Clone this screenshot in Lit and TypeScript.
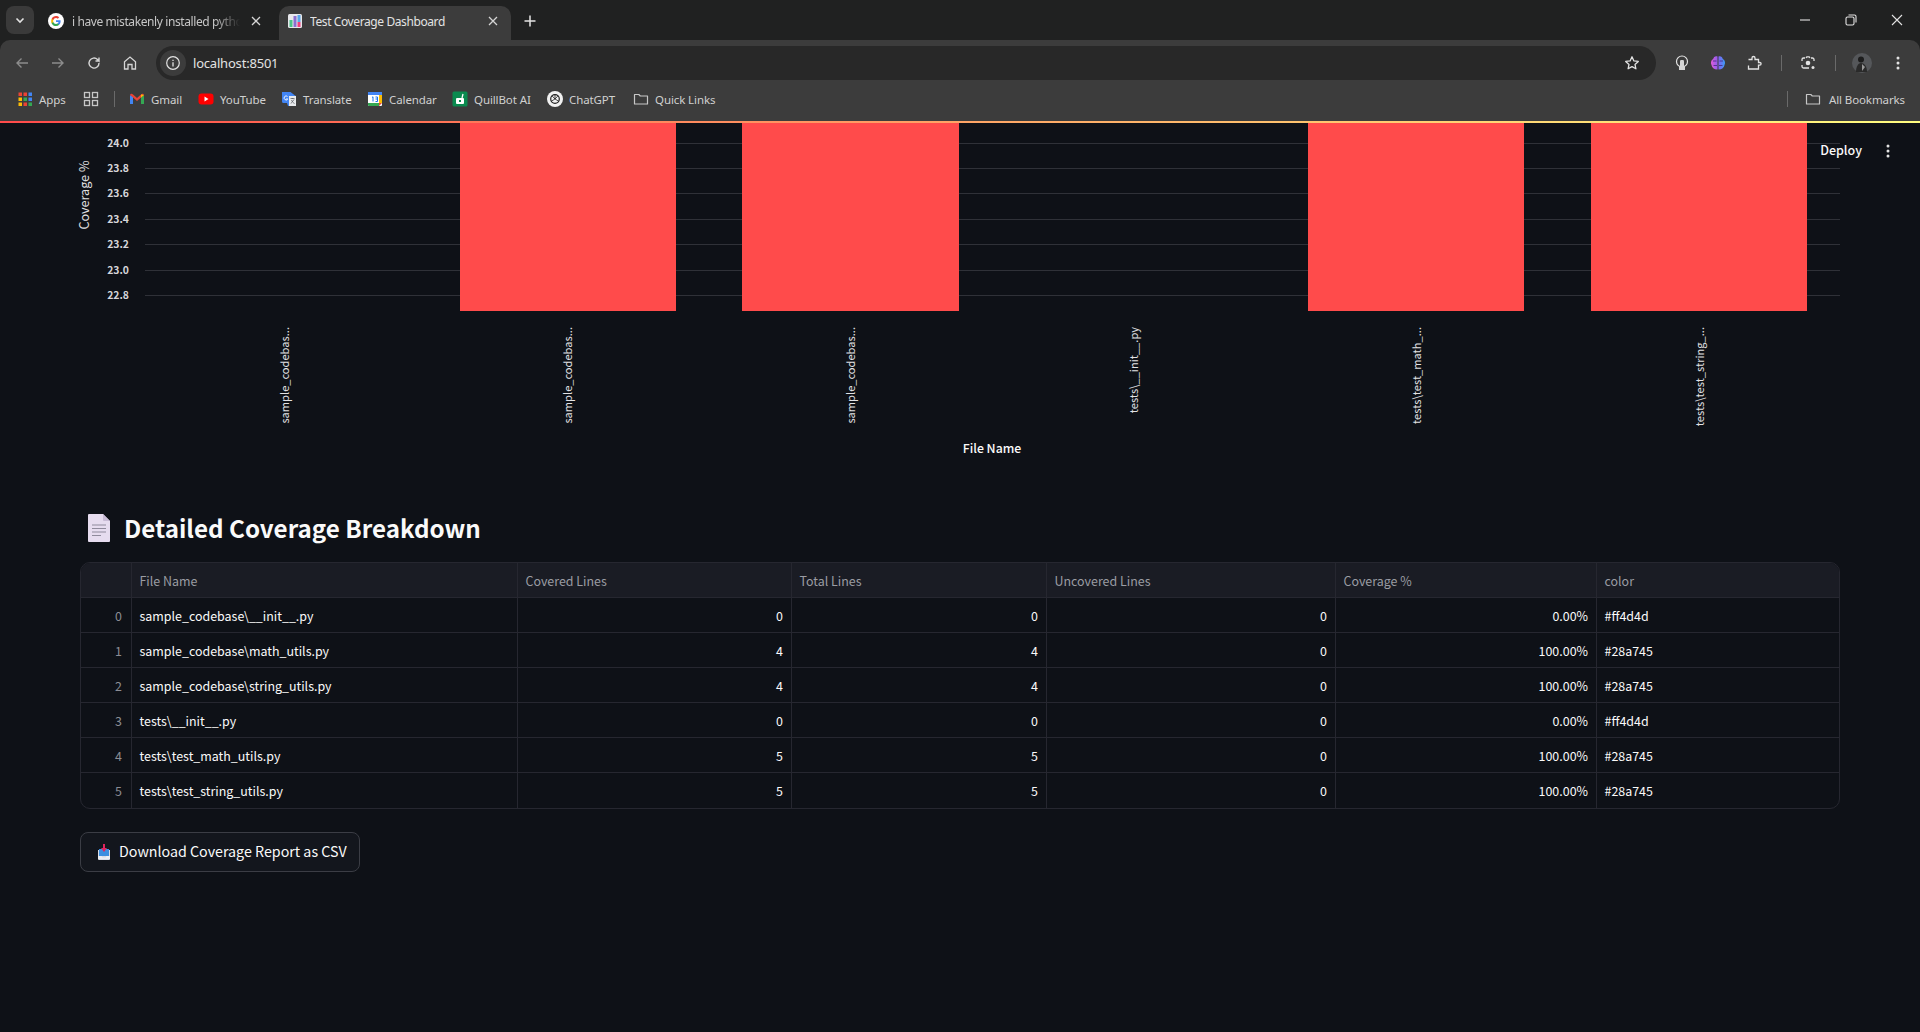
import { LitElement, html, css, svg } from "lit";
import { customElement } from "lit/decorators.js";

const ticks = [["24.0",143.5],["23.8",168.5],["23.6",193.5],["23.4",219.5],["23.2",244.5],["23.0",270.5],["22.8",295.5]] as const;
const bars = [[460,216],[742,217],[1308,216],[1591,216]];
const xLabels = [[285,"sample_codebas..."],[568,"sample_codebas..."],[851,"sample_codebas..."],[1134,"tests\\__init__.py"],[1417,"tests\\test_math_..."],[1700,"tests\\test_string_..."]] as const;
const rows = [
  ["0","sample_codebase\\__init__.py","0","0","0","0.00%","#ff4d4d"],
  ["1","sample_codebase\\math_utils.py","4","4","0","100.00%","#28a745"],
  ["2","sample_codebase\\string_utils.py","4","4","0","100.00%","#28a745"],
  ["3","tests\\__init__.py","0","0","0","0.00%","#ff4d4d"],
  ["4","tests\\test_math_utils.py","5","5","0","100.00%","#28a745"],
  ["5","tests\\test_string_utils.py","5","5","0","100.00%","#28a745"],
];
const heads = ["","File Name","Covered Lines","Total Lines","Uncovered Lines","Coverage %","color"];

const icon = (inner: unknown, size = 16, vb = "0 0 16 16") => html`<svg width=${size} height=${size} viewBox=${vb} fill="none">${inner}</svg>`;

const gFavicon = icon(svg`<circle cx="8" cy="8" r="8" fill="#fff"/>
  <path d="M12.6 8.2c0-.4 0-.7-.1-1H8v1.9h2.6c-.1.6-.5 1.1-1 1.5v1.2h1.6c.9-.9 1.4-2.1 1.4-3.6z" fill="#4285f4"/>
  <path d="M8 13c1.3 0 2.4-.4 3.2-1.2l-1.6-1.2c-.4.3-1 .5-1.6.5-1.2 0-2.3-.8-2.7-2H3.7v1.3C4.5 12 6.1 13 8 13z" fill="#34a853"/>
  <path d="M5.3 9.1c-.2-.7-.2-1.4 0-2.1V5.700H3.700c-.7 1.400-.7 3.100 0 4.600z" fill="#fbbc05"/>
  <path d="M8 5c.7 0 1.300.2 1.800.7l1.400-1.400C10.300 3.500 9.200 3 8 3 6.100 3 4.500 4 3.700 5.700L5.300 7C5.700 5.800 6.800 5 8 5z" fill="#ea4335"/>`);
const chartFavicon = icon(svg`<rect x="1" y="1" width="14" height="14" rx="1.500" fill="#e8e8ec"/>
  <rect x="2.500" y="7" width="3" height="7" fill="#4cc38a"/><rect x="6.500" y="3" width="3" height="11" fill="#8a6fd1"/><rect x="10.500" y="9" width="3" height="5" fill="#ef3f7f"/><rect x="10.500" y="2" width="3" height="7" fill="#5aa7e8"/>`);
const closeX = icon(svg`<path d="M4 4l8 8M12 4l-8 8" stroke="#d5d5d5" stroke-width="1.300"/>`);

const tb = {
  back: icon(svg`<path d="M14 8H3M7.500 3.500L3 8l4.500 4.500" stroke="#8c8c8c" stroke-width="1.400"/>`),
  fwd: icon(svg`<path d="M2 8h11M8.500 3.500L13 8l-4.500 4.500" stroke="#8c8c8c" stroke-width="1.400"/>`),
  reload: icon(svg`<path d="M13 8a5 5 0 1 1-1.500-3.500L13 6V2.500M13 6H9.500" stroke="#d5d5d5" stroke-width="1.400"/>`),
  home: icon(svg`<path d="M2.500 14V6.700L8 2l5.500 4.700V14H10V9.500H6V14z" stroke="#d5d5d5" stroke-width="1.300"/>`),
  info: icon(svg`<circle cx="8" cy="8" r="6.300" stroke="#e3e3e3" stroke-width="1.200"/><path d="M8 7.200V11.500M8 4.700v1.300" stroke="#e3e3e3" stroke-width="1.300"/>`),
  star: icon(svg`<path d="M8 1.800l1.900 4.100 4.400.5-3.300 3 .9 4.400L8 11.600l-3.900 2.200.9-4.400-3.300-3 4.400-.5z" stroke="#e3e3e3" stroke-width="1.300" stroke-linejoin="round"/>`),
  bulb: icon(svg`<circle cx="8" cy="6.500" r="5.500" stroke="#e3e3e3" stroke-width="1.200"/><rect x="6" y="5" width="4" height="7" rx="1.200" fill="#d5d5d5"/><rect x="5" y="11" width="6" height="4" fill="#d5d5d5"/>`),
  brain: icon(svg`<defs><linearGradient id="br" x1="0" x2="1"><stop offset="0" stop-color="#e05bd8"/><stop offset=".5" stop-color="#8a5cf0"/><stop offset="1" stop-color="#3a9cf5"/></linearGradient></defs>
    <path d="M7.500 1.500C5.500.7 3.500 2 3.200 4 1 5 .3 8 1.500 10c.3 2.500 2.500 4.500 6 4.500zM8.500 1.500c2-.8 4 .5 4.300 2.500 2.200 1 2.900 4 1.700 6-.3 2.500-2.500 4.500-6 4.500z" fill="url(#br)"/>
    <path d="M3 6h3.500M3.500 10.500H7M9.500 6H13M9 10.500h3.500" stroke="#3d2a7a" stroke-width=".8"/>`),
  puzzle: icon(svg`<path d="M2 4.500h3.500V3a1.500 1.500 0 0 1 3 0v1.500H12V7.500h1.300a1.300 1.300 0 0 1 0 2.600H12v3.900H2V10.500" stroke="#e3e3e3" stroke-width="1.300" transform="translate(.5 0)"/>`),
  lens: icon(svg`<path d="M5 3H3.500A1.500 1.500 0 0 0 2 4.500V6M11 3h1.500A1.500 1.500 0 0 1 14 4.500V6M2 10v1.500A1.500 1.500 0 0 0 3.500 13H9" stroke="#e3e3e3" stroke-width="1.300"/><circle cx="8" cy="8" r="2.300" fill="#e3e3e3"/><circle cx="13" cy="12.500" r="1.500" fill="#e3e3e3"/><path d="M6 3l.8-1.200h2.400L10 3" stroke="#e3e3e3" stroke-width="1.200"/>`),
  kebab: icon(svg`<circle cx="8" cy="3" r="1.500" fill="#e3e3e3"/><circle cx="8" cy="8" r="1.500" fill="#e3e3e3"/><circle cx="8" cy="13" r="1.500" fill="#e3e3e3"/>`),
};
const avatar = html`<svg width="20" height="20" viewBox="0 0 20 20"><circle cx="10" cy="10" r="10" fill="#55575a"/><circle cx="9" cy="6.500" r="3" fill="#1d1d1d"/><path d="M4 19c0-5 2-9 5-9s6 3 6 9z" fill="#2a2a2a"/><path d="M10 11l3 3-3 4z" fill="#9a9a9a"/></svg>`;

const folder = icon(svg`<path d="M1.500 3.500h4.300l1.500 1.500h7.200v8H1.500z" stroke="#c7c7c7" stroke-width="1.200" stroke-linejoin="round"/>`);
const bookmarks = [
  { w: 66, label: "Apps", icon: icon(svg`${[1.5,6.5,11.5].flatMap((y, r) => [1.5,6.5,11.5].map((x, c) => svg`<rect x=${x} y=${y} width="3.500" height="3.500" fill=${[["#ea4335","#ea4335","#4285f4"],["#fbbc05","#34a853","#4285f4"],["#fbbc05","#ea4335","#34a853"]][r][c]}/>`))}`) },
  { w: 31, label: "", grid: true, icon: icon(svg`<rect x="1.500" y="1.500" width="5" height="5" stroke="#c7c7c7" stroke-width="1.300"/><rect x="9.500" y="1.500" width="5" height="5" stroke="#c7c7c7" stroke-width="1.300"/><rect x="1.500" y="9.500" width="5" height="5" stroke="#c7c7c7" stroke-width="1.300"/><rect x="9.500" y="9.500" width="5" height="5" stroke="#c7c7c7" stroke-width="1.300"/>`) },
  { w: 69, label: "Gmail", icon: icon(svg`<path d="M1 13V4l3 2v7z" fill="#4285f4"/><path d="M12 13V6l3-2v9z" fill="#34a853"/><path d="M1 4c.5-1.500 2-1.500 3-.5L8 7l4-3.500c1-1 2.500-1 3 .5l-3 2.500L8 10 4 6.500z" fill="#ea4335"/><path d="M12 3.500l3 .5-3 2.500z" fill="#fbbc05"/>`) },
  { w: 83, label: "YouTube", icon: icon(svg`<rect x="0.500" y="2.500" width="15" height="11" rx="3" fill="#f00"/><path d="M6.500 5.500l4 2.500-4 2.500z" fill="#fff"/>`) },
  { w: 86, label: "Translate", icon: icon(svg`<path d="M1 1h8.500L14 4.500h.5V15H7L6 12H2.500A1.500 1.500 0 0 1 1 10.500z" fill="#4285f4"/><path d="M8 5h7v10H8z" fill="#e8eaed"/><path d="M6.500 5.500a2 2 0 1 0 .3 2.500H5" stroke="#fff" stroke-width=".9"/><path d="M9.500 7.500h4M11.500 7v1M10 12.500l3-4M10.500 9c.5 1.500 2 3 3 3.500" stroke="#5f6368" stroke-width=".8"/>`) },
  { w: 85, label: "Calendar", icon: icon(svg`<rect x="1" y="1" width="14" height="14" rx="1" fill="#fff"/><path d="M1 1h14v3H1z" fill="#4285f4"/><path d="M1 12h11v3H2a1 1 0 0 1-1-1z" fill="#34a853"/><path d="M12 4h3v8h-3z" fill="#fbbc05"/><path d="M12 12h3l-3 3z" fill="#ea4335"/><path d="M5 6.500l1-.7V10.500M8.500 6h2v4.500h-2M10.500 8h-2" stroke="#1a73e8" stroke-width="1"/>`) },
  { w: 95, label: "QuillBot AI", icon: icon(svg`<rect x="0.500" y="0.500" width="15" height="15" rx="1.500" fill="#0a8a4f"/><rect x="4" y="7" width="8" height="6" rx="1" fill="#fff"/><rect x="7" y="9" width="2" height="2" fill="#0a8a4f"/><path d="M10 7l1-4" stroke="#fff" stroke-width="1.300"/>`) },
  { w: 86, label: "ChatGPT", icon: icon(svg`<circle cx="8" cy="8" r="8" fill="#f1f1f1"/><circle cx="8" cy="8" r="4.300" stroke="#222" stroke-width="1.200"/><path d="M8 3.700v4.300l3.700 2.200M8 8l-3.700 2.200M5 4.800l3 3.200 3-3.200" stroke="#222" stroke-width=".8"/>`) },
  { w: 90, label: "Quick Links", icon: folder },
];

@customElement("app-root")
export class AppRoot extends LitElement {
  static styles = css`
    :host { display: flex; flex-direction: column; height: 100vh; overflow: hidden; background: #0e1117; font-family: "Noto Sans CJK SC", "Noto Sans", sans-serif; position: relative; }
    .chrome { flex: none; background: #202121; font-family: "Noto Sans", "Liberation Sans", sans-serif; color: #e3e3e3; font-size: 12px; }
    .strip { height: 40px; display: flex; align-items: flex-end; box-sizing: border-box; padding-left: 6px; }
    .tab-menu { width: 28px; height: 28px; margin-bottom: 6px; background: #3a3a3a; border-radius: 8px; display: flex; align-items: center; justify-content: center; }
    .tab { height: 34px; display: flex; align-items: center; box-sizing: border-box; position: relative; padding-bottom: 4px; }
    .tab.one { width: 232px; margin-left: 6px; padding-left: 8px; color: #c7c7c7; }
    .tab.two { width: 232px; margin-left: 7px; background: #3c3c3c; border-radius: 10px 10px 0 0; padding-left: 8px; }
    .tab .title { margin-left: 8px; width: 168px; overflow: hidden; white-space: nowrap; letter-spacing: -0.4px; -webkit-mask-image: linear-gradient(90deg,#000 85%,transparent); }
    .tab.two .title { margin-left: 7px; width: 167px; mask-image: none; -webkit-mask-image: none; }
    .tab .x { margin-left: 8px; display: flex; }
    .plus { width: 20px; height: 34px; padding-bottom: 4px; box-sizing: border-box; margin-left: 9px; display: flex; align-items: center; justify-content: center; }
    .spacer { flex: 1; }
    .win { width: 46px; height: 40px; display: flex; align-items: center; justify-content: center; }
    .toolbar { height: 46px; background: #3c3c3c; border-radius: 10px 10px 0 0; display: flex; align-items: center; padding: 0 4px; box-sizing: border-box; }
    .btn { width: 36px; height: 34px; display: flex; align-items: center; justify-content: center; flex: none; }
    .addr { flex: 1; height: 34px; margin: 0 8px; background: #282828; border-radius: 17px; display: flex; align-items: center; font-size: 13px; padding-right: 7px; }
    .addr .chip { width: 26px; height: 26px; margin-left: 4px; border-radius: 50%; background: #3c3c3c; display: flex; align-items: center; justify-content: center; }
    .addr .url { margin-left: 7px; flex: 1; letter-spacing: -0.2px; }
    .addr .btn { width: 34px; }
    .tsep { width: 1px; height: 16px; background: #6a6a6a; flex: none; margin: 0 8.500px; }
    .marks { height: 35px; background: #3c3c3c; display: flex; align-items: center; padding: 0 0 9px 17px; box-sizing: border-box; color: #d0d0d0; font-size: 11.500px; letter-spacing: -0.1px; }
    .mark { display: flex; align-items: center; gap: 6px; flex: none; white-space: nowrap; }
    .marks .vsep { width: 1px; height: 16px; background: #6a6a6a; flex: none; margin-right: 14px; }
    .all { margin-left: auto; display: flex; align-items: center; padding-right: 15px; gap: 8px; }
    .all .vsep { margin-right: 9px; }
    .deco { height: 2px; flex: none; background: linear-gradient(90deg, #ff4b4b, #fffd80); }
    main { flex: 1; display: flex; flex-direction: column; min-height: 0; }
    .chart { display: block; flex: none; }
    .chart text { font-family: "Noto Sans CJK SC", "Noto Sans", sans-serif; fill: #e2e2e5; font-size: 11.100px; }
    .chart .ytitle { font-size: 12.600px; }
    .chart .tick { font-weight: 700; fill: #d6d6da; font-size: 10.400px; }
    .chart .bold { font-weight: 500; fill: #fafafa; font-size: 12.300px; }
    .section { padding: 0 80px; }
    h2 { margin: 0; height: 48px; display: flex; align-items: center; gap: 14px; font-size: 24.200px; font-weight: 700; color: #fafafa; line-height: 48px; padding-left: 8px; }
    .table { margin-top: 10px; display: grid; grid-template-columns: 51px 386px 274px 255px 289px 261px 1fr; border: 1px solid #262730; border-radius: 10px; overflow: hidden; font-size: 12.450px; box-sizing: border-box; width: 1760px; }
    .c { height: 35px; line-height: 36px; padding: 0 8px 0 7.500px; box-sizing: border-box; color: #fafafa; border-right: 1px solid #262730; border-bottom: 1px solid #262730; white-space: nowrap; overflow: hidden; }
    .c.h { background: #1a1c24; color: #9a9ca3; height: 35px; }
    .c.idx { color: #8b8d94; text-align: right; padding-right: 9px; }
    .c.n { text-align: right; }
    .c.last { border-right: none; }
    .c.bot { border-bottom: none; }
    .dl { margin-top: 23px; width: 280px; height: 40px; box-sizing: border-box; border: 1px solid #3b3d45; border-radius: 8px; background: #13161d; color: #fafafa; font: inherit; font-size: 14.250px; display: flex; align-items: center; gap: 8px; padding: 0 0 0 16px; white-space: nowrap; }
    .dl svg { flex: none; }
    .dl span { margin-top: -3px; }
    .deploy { position: absolute; top: 139px; right: 58px; font-size: 12.500px; line-height: 22px; font-weight: 500; color: #fafafa; }
    .kebab { position: absolute; top: 143px; right: 24px; display: flex; }
  `;

  render() {
    return html`
      <div class="chrome">
        <div class="strip">
          <div class="tab-menu">${icon(svg`<path d="M4.500 6.500L8 10l3.500-3.500" stroke="#e3e3e3" stroke-width="1.600"/>`)}</div>
          <div class="tab one">${gFavicon}<span class="title">i have mistakenly installed python</span><span class="x">${closeX}</span></div>
          <div class="tab two">${chartFavicon}<span class="title">Test Coverage Dashboard</span><span class="x">${closeX}</span></div>
          <div class="plus">${icon(svg`<path d="M8 2.500v11M2.500 8h11" stroke="#e3e3e3" stroke-width="1.500"/>`)}</div>
          <div class="spacer"></div>
          <div class="win">${icon(svg`<path d="M3 8h10" stroke="#e3e3e3" stroke-width="1.100"/>`)}</div>
          <div class="win">${icon(svg`<rect x="3" y="5" width="8" height="8" rx="1.500" stroke="#e3e3e3" stroke-width="1.100"/><path d="M5.500 3h6A1.500 1.500 0 0 1 13 4.500v6" stroke="#e3e3e3" stroke-width="1.100"/>`)}</div>
          <div class="win">${icon(svg`<path d="M3 3l10 10M13 3L3 13" stroke="#e3e3e3" stroke-width="1.100"/>`)}</div>
        </div>
        <div class="toolbar">
          <div class="btn">${tb.back}</div><div class="btn">${tb.fwd}</div><div class="btn">${tb.reload}</div><div class="btn">${tb.home}</div>
          <div class="addr"><div class="chip">${tb.info}</div><span class="url">localhost:8501</span><div class="btn">${tb.star}</div></div>
          <div class="btn">${tb.bulb}</div><div class="btn">${tb.brain}</div><div class="btn">${tb.puzzle}</div>
          <div class="tsep"></div>
          <div class="btn">${tb.lens}</div>
          <div class="tsep"></div>
          <div class="btn">${avatar}</div><div class="btn">${tb.kebab}</div>
        </div>
        <div class="marks">
          ${bookmarks.map((b) => html`<div class="mark" style="width:${b.w}px">${b.icon}${b.label ? html`<span>${b.label}</span>` : ""}</div>${b.grid ? html`<div class="vsep"></div>` : ""}`)}
          <div class="all"><div class="vsep"></div>${folder}<span>All Bookmarks</span></div>
        </div>
      </div>
      <div class="deco"></div>
      <main>
        <svg class="chart" width="1920" height="381" viewBox="0 123 1920 381">
          ${ticks.map(([t, y]) => svg`<line x1="145" x2="1840" y1=${y} y2=${y} stroke="#2f3138"/><text class="tick" x="129" y=${y + 3.5} text-anchor="end">${t}</text>`)}
          ${bars.map(([x, w]) => svg`<rect x=${x} y="123" width=${w} height="188" fill="#ff4b4b"/>`)}
          <text class="ytitle" transform="translate(89 195) rotate(-90)" text-anchor="middle">Coverage %</text>
          ${xLabels.map(([x, t]) => svg`<text transform="translate(${x + 4} 327) rotate(-90)" text-anchor="end">${t}</text>`)}
          <text class="bold" x="992" y="453" text-anchor="middle">File Name</text>
        </svg>
        <div class="section">
          <h2>
            <svg width="22" height="28" viewBox="0 0 22 28"><path d="M0 1a1 1 0 0 1 1-1h14l7 7v20a1 1 0 0 1-1 1H1a1 1 0 0 1-1-1z" fill="#e6dcef"/><path d="M15 0l7 7h-6a1 1 0 0 1-1-1z" fill="#c9bcd6"/><path d="M4 11h14M4 14.500h14M4 18h14M4 21.500h9" stroke="#8f8a9c" stroke-width="1"/></svg>
            <span>Detailed Coverage Breakdown</span>
          </h2>
          <div class="table">
            ${heads.map((h, i) => html`<div class="c h ${i === 6 ? "last" : ""}">${h}</div>`)}
            ${rows.map((r, ri) => r.map((v, i) => html`<div class="c ${i === 0 ? "idx" : ""} ${i >= 2 && i <= 5 ? "n" : ""} ${i === 6 ? "last" : ""} ${ri === 5 ? "bot" : ""}">${v}</div>`))}
          </div>
          <button class="dl">
            <svg width="14" height="16" viewBox="0 0 14 16"><path d="M1 6h12v9a1 1 0 0 1-1 1H2a1 1 0 0 1-1-1z" fill="#d9dce6"/><path d="M2 5h10v7H2z" fill="#3d8fe0"/><path d="M1 12h3.500l1 1.500h3l1-1.500H13v3H1z" fill="#eceef4"/><path d="M6 0h2v4h2L7 8 4 4h2z" fill="#e0245e"/></svg>
            <span>Download Coverage Report as CSV</span>
          </button>
        </div>
      </main>
      <div class="deploy">Deploy</div>
      <div class="kebab">${tb.kebab}</div>
    `;
  }
}
